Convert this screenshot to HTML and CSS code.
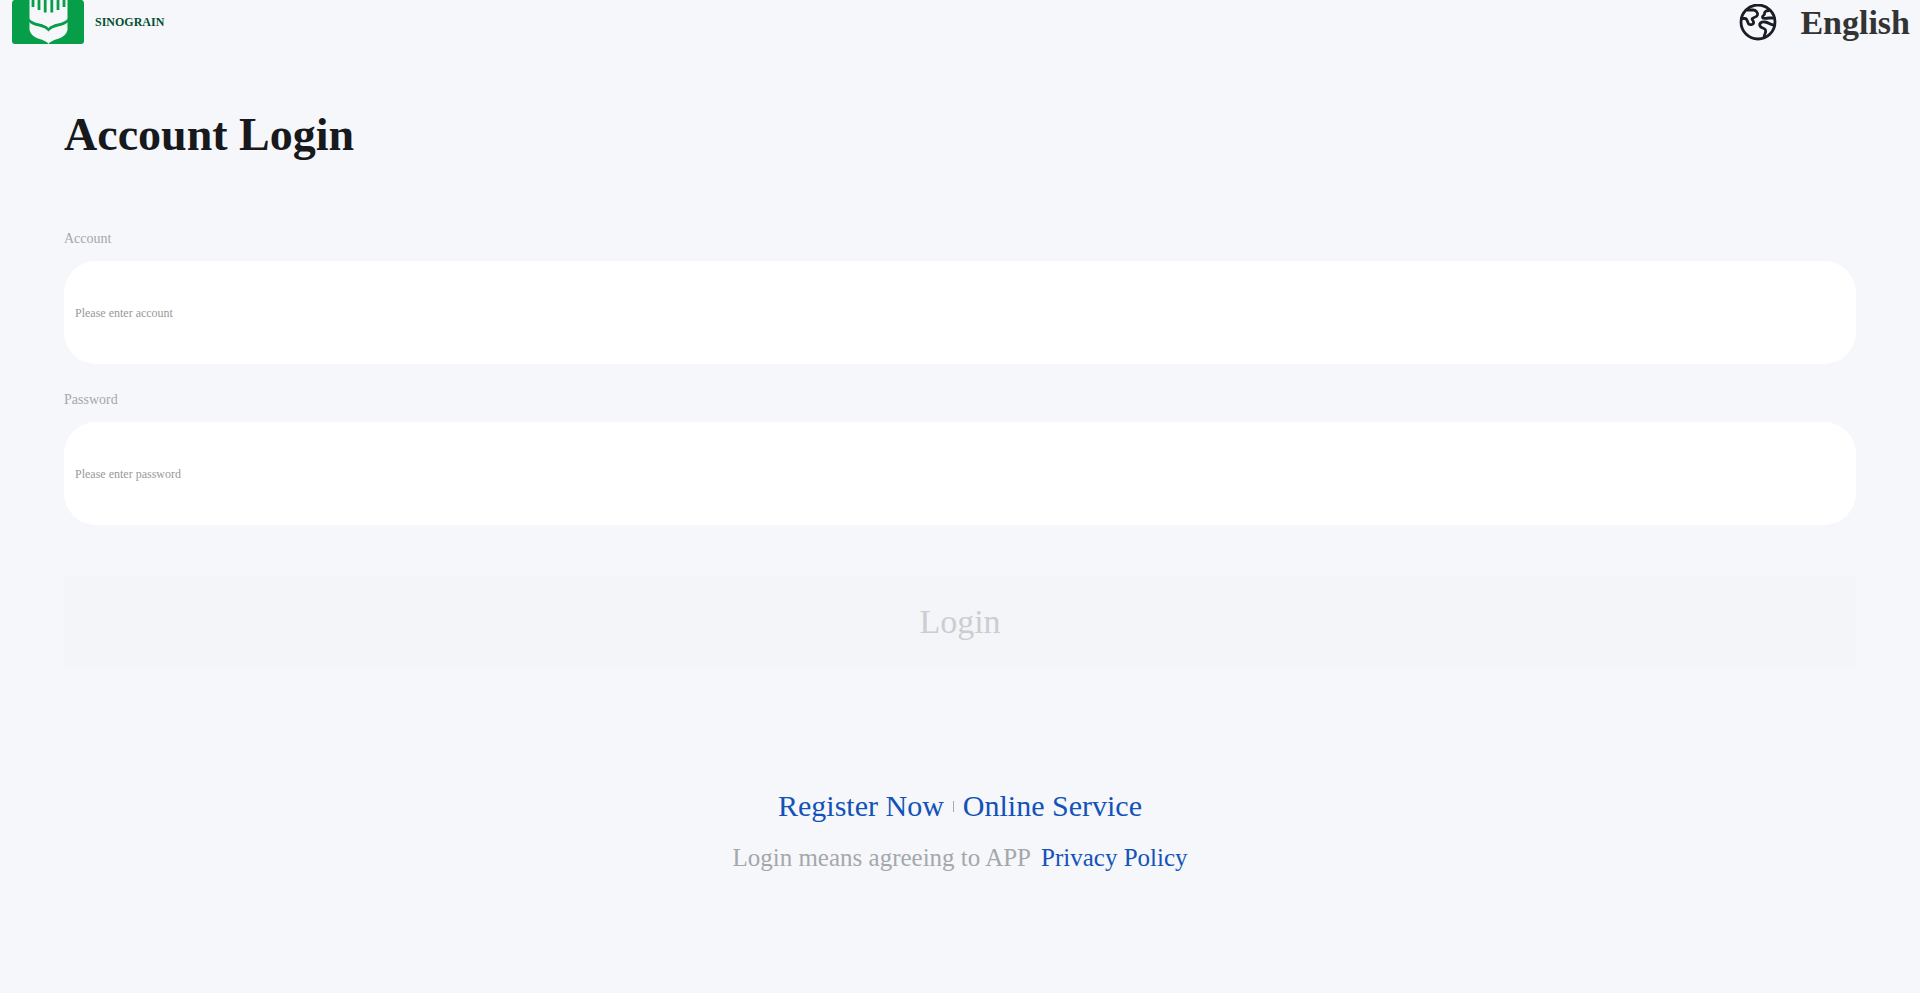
FILE: index.html
```html
<!DOCTYPE html>
<html lang="en">
<head>
<meta charset="utf-8">
<title>Account Login</title>
<link rel="stylesheet" href="styles.css">
</head>
<body>
<header class="topbar">
  <div class="brand">
    <svg class="brand-logo" viewBox="0 0 72 44" aria-hidden="true">
      <path fill="#079e49" d="M2 0H70Q72 1 72 3V41Q72 44 69 44H3Q0 44 0 41V3Q0 1 2 0Z"/>
      <path fill="#f5f7fb" d="M17.500 0H55.500V30Q54 36 47 38.500Q38 41 36.500 44Q35 41 26 38.500Q19 36 17.500 30Z"/>
      <path fill="none" stroke="#079e49" stroke-width="2.800" d="M21 0V7M27 0V10M33.200 0V12.500M39.800 0V12.500M46 0V10M52 0V7"/>
      <path fill="#079e49" d="M17 18.500Q20 22 27 23.500Q34 25 36.500 28Q39 25 46 23.500Q53 22 56 18.500V22Q53 25 46 26.500Q39 28 36.500 31.500Q34 28 27 26.500Q20 25 17 22Z"/>
    </svg>
    <span class="brand-name">SINOGRAIN</span>
  </div>
  <button class="language" type="button">
    <svg class="globe" viewBox="0 0 38 38" fill="none" stroke="#1b1d26" stroke-width="2.800" stroke-linejoin="round" stroke-linecap="round" aria-hidden="true">
      <circle cx="19" cy="18" r="17"/>
      <path d="M2.500 14.500H6C8 14.500 8 16.500 9 18.500C9.500 20.500 11 21 13 20.500C16 19.500 14 16.500 13 15C13 13.500 18 13.500 18.500 11C19 8.500 17 6 14 6H8"/>
      <path d="M30 6.500C27 6.500 25 8 25.500 10C25.500 11.500 23 11.500 23.500 13.500C24.500 15.500 28 14 30 14H35"/>
      <path d="M35 21C31 21 30 18.500 26 18C22 17.500 20 19.500 21 22C22 24.500 25.500 23.500 26.500 26C27.500 28.500 25 30.500 25 33.500"/>
    </svg>
    <span>English</span>
  </button>
</header>
<main class="content">
  <h1 class="title">Account Login</h1>
  <form class="form">
    <label class="label" for="account">Account</label>
    <input class="field" id="account" type="text" placeholder="Please enter account">
    <label class="label" for="password">Password</label>
    <input class="field" id="password" type="password" placeholder="Please enter password">
    <button class="submit" type="submit" disabled>Login</button>
  </form>
  <nav class="links">
    <a href="#register">Register Now</a>
    <span class="divider"></span>
    <a href="#service">Online Service</a>
  </nav>
  <p class="policy">Login means agreeing to APP <a href="#privacy">Privacy Policy</a></p>
</main>
</body>
</html>
```
FILE: styles.css
```css
* { box-sizing: border-box; }
body {
  margin: 0;
  background: #f5f7fb;
  font-family: "Liberation Serif", "Times New Roman", serif;
}
.topbar {
  display: flex;
  align-items: center;
  justify-content: space-between;
  height: 44px;
  padding: 0 10px 0 12px;
}
.brand { display: flex; align-items: center; gap: 11px; }
.brand-logo { display: block; width: 72px; height: 44px; }
.brand-name { color: #04502f; font-size: 12px; font-weight: bold; }
.language {
  display: flex;
  align-items: center;
  gap: 23px;
  padding: 2px 0 0;
  border: 0;
  background: none;
  color: #333;
  font: bold 34px/42px "Liberation Serif", serif;
}
.globe { width: 38px; height: 38px; }
.content { padding: 0 64px; }
.title {
  margin: 63px 0 0;
  color: #17191c;
  font-size: 46px;
  line-height: 56px;
}
.form { display: flex; flex-direction: column; margin-top: 66px; }
.label {
  margin-bottom: 12px;
  color: #a5a7ab;
  font-size: 14px;
  line-height: 20px;
}
.field {
  width: 100%;
  height: 103px;
  margin-bottom: 26px;
  padding: 1px 11px 0;
  border: 0;
  border-radius: 32px;
  background: #fff;
  color: #333;
  font: 12px "Liberation Serif", serif;
}
.field::placeholder { color: #999; opacity: 1; }
.submit {
  height: 92px;
  margin-top: 25px;
  border: 0;
  background: #f4f5f9;
  color: #cccdd0;
  font: 34px "Liberation Serif", serif;
}
.links {
  display: flex;
  align-items: center;
  justify-content: center;
  gap: 9px;
  margin-top: 120px;
  font-size: 30px;
  line-height: 36px;
}
.divider { width: 1px; height: 11px; background: #aaa; }
a { color: #1352b8; text-decoration: none; }
.policy {
  display: flex;
  justify-content: center;
  gap: 10px;
  margin: 19px 0 0;
  color: #a5a7ab;
  font-size: 25px;
  line-height: 30px;
}
```
